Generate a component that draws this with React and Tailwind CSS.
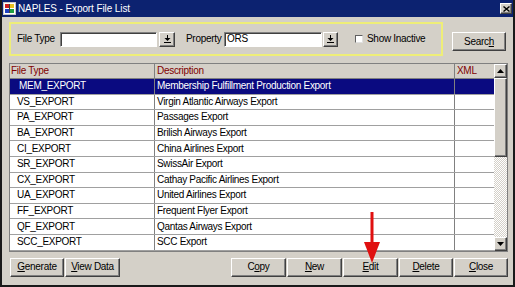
export default function App() {
  const rows = [
    ["MEM_EXPORT", "Membership Fulfillment Production Export"],
    ["VS_EXPORT", "Virgin Atlantic Airways Export"],
    ["PA_EXPORT", "Passages Export"],
    ["BA_EXPORT", "Brilish Airways Export"],
    ["CI_EXPORT", "China Airlines Export"],
    ["SR_EXPORT", "SwissAir Export"],
    ["CX_EXPORT", "Cathay Pacific Airlines Export"],
    ["UA_EXPORT", "United Airlines Export"],
    ["FF_EXPORT", "Frequent Flyer Export"],
    ["QF_EXPORT", "Qantas Airways Export"],
    ["SCC_EXPORT", "SCC Export"],
  ];
  const bevel =
    "bg-[#d4d0c8] border border-t-white border-l-white border-r-[#404040] border-b-[#404040] shadow-[inset_-1px_-1px_0_#808080]";
  const Btn = ({ w, children }) => (
    <div className={`${bevel} ${w} h-[19px] flex items-center justify-center shrink-0`}>{children}</div>
  );
  const DropBtn = ({ w }) => (
    <div className={`${bevel} ${w} h-[15px] flex items-center justify-center shrink-0`}>
      <svg width="7" height="8" viewBox="0 0 7 8">
        <rect x="3" y="0" width="1" height="3" fill="#000" />
        <path d="M0.5 3 L6.5 3 L3.5 6 Z" fill="#000" />
        <rect x="0" y="7" width="7" height="1" fill="#000" />
      </svg>
    </div>
  );
  const field =
    "bg-white h-[15px] border border-t-[#808080] border-l-[#808080] border-r-white border-b-white shadow-[inset_1px_1px_0_#404040] flex items-center pl-[2px] shrink-0";
  return (
    <div className="relative w-[515px] h-[287px] bg-[#d4d0c8] border-x-2 border-b-2 border-[#1a1a1a] flex flex-col font-['Liberation_Sans',Arial,sans-serif] text-[10px] tracking-[-0.3px] leading-none text-black overflow-hidden whitespace-nowrap">
      {/* Title bar */}
      <div className="h-[17px] bg-[#0c2270] flex items-center shrink-0 pl-[1px] pr-[1px]">
        <svg width="13" height="13" viewBox="0 0 13 13" className="shrink-0">
          <rect x="0" y="0" width="13" height="13" fill="#c8c8c8" />
          <rect x="1" y="1" width="11" height="11" fill="#fff" />
          <rect x="2" y="2" width="4" height="4" fill="#d02020" />
          <rect x="7" y="2" width="4" height="4" fill="#e8c020" />
          <rect x="2" y="7" width="4" height="4" fill="#2040c0" />
          <rect x="7" y="7" width="4" height="4" fill="#20a040" />
          <rect x="6" y="2" width="1" height="9" fill="#404040" />
        </svg>
        <span className="text-white ml-[2px] text-[10px] tracking-[-0.1px]">NAPLES - Export File List</span>
        <div className={`${bevel} ml-auto w-[12px] h-[11px] flex items-center justify-center`}>
          <svg width="7" height="6" viewBox="0 0 7 6">
            <path d="M0.5 0.5 L6.5 5.5 M6.5 0.5 L0.5 5.5" stroke="#000" strokeWidth="1.4" />
          </svg>
        </div>
      </div>

      <div className="flex flex-col pl-[7px] pr-[6px]">
        {/* Filter row */}
        <div className="flex items-start mt-[5px]">
          <div className="w-[434px] h-[34px] border-2 border-[#eeee78] flex items-center shrink-0">
            <span className="w-[49px] pl-[6px] shrink-0">File Type</span>
            <div className={`${field} w-[97px]`}></div>
            <div className="w-[2px]" />
            <DropBtn w="w-[16px]" />
            <span className="ml-[11px] w-[38px] shrink-0">Property</span>
            <div className={`${field} w-[98px]`}>ORS</div>
            <div className="w-[1px]" />
            <DropBtn w="w-[15px]" />
            <div className="ml-[17px] w-[8px] h-[8px] bg-white border border-t-[#606060] border-l-[#606060] border-r-[#e0e0e0] border-b-[#e0e0e0] shrink-0" />
            <span className="ml-[4px]">Show Inactive</span>
          </div>
          <div className="ml-[9px] mt-[10px]">
            <div className={`${bevel} w-[54px] h-[19px] flex items-center justify-center`}>
              <span>
                Searc<span className="underline">h</span>
              </span>
            </div>
          </div>
        </div>

        {/* Grid */}
        <div className="mt-[7px] w-[499px] border border-[#808080] flex">
          <div className="flex flex-col w-[484px] bg-white">
            <div className="flex h-[15px] bg-[#d4d0c8] text-[#800000] border-b border-[#808080]">
              <div className="w-[145px] pl-[1px] flex items-center border-r border-[#808080]">File Type</div>
              <div className="w-[300px] pl-[2px] flex items-center border-r border-[#808080]">Description</div>
              <div className="w-[39px] pl-[2px] flex items-center">XML</div>
            </div>
            {rows.map(([a, b], i) => (
              <div
                key={a}
                className={`flex h-[15.6px] border-b border-[#a0a0a0] ${i === 0 ? "bg-[#0a0a80] text-white" : "bg-white"}`}
              >
                <div className={`w-[145px] ${i === 0 ? "pl-[9px]" : "pl-[7px]"} flex items-center border-r border-[#808080]`}>{a}</div>
                <div className="w-[300px] pl-[2px] flex items-center border-r border-[#808080]">{b}</div>
                <div className="w-[39px]"></div>
              </div>
            ))}
          </div>
          {/* Scrollbar */}
          <div className="w-[13px] flex flex-col">
            <div className={`${bevel} h-[14px] flex items-center justify-center`}>
              <svg width="7" height="4" viewBox="0 0 7 4"><path d="M3.5 0 L7 4 L0 4 Z" fill="#000" /></svg>
            </div>
            <div className={`${bevel} h-[79px]`} />
            <div className="flex-1 bg-[repeating-conic-gradient(#ffffff_0_25%,#d4d0c8_0_50%)] bg-[length:2px_2px]" />
            <div className={`${bevel} h-[14px] flex items-center justify-center`}>
              <svg width="7" height="4" viewBox="0 0 7 4"><path d="M0 0 L7 0 L3.5 4 Z" fill="#000" /></svg>
            </div>
          </div>
        </div>

        {/* Buttons */}
        <div className="flex mt-[6px] pl-[1px]">
          <Btn w="w-[54px]"><span><span className="underline">G</span>enerate</span></Btn>
          <div className="w-[1px]" />
          <Btn w="w-[55px]"><span><span className="underline">V</span>iew Data</span></Btn>
          <div className="flex ml-auto gap-[1px] mr-[-1px]">
            <Btn w="w-[55px]"><span>C<span className="underline">o</span>py</span></Btn>
            <Btn w="w-[55px]"><span><span className="underline">N</span>ew</span></Btn>
            <Btn w="w-[55px]"><span><span className="underline">E</span>dit</span></Btn>
            <Btn w="w-[54px]"><span><span className="underline">D</span>elete</span></Btn>
            <Btn w="w-[54px]"><span><span className="underline">C</span>lose</span></Btn>
          </div>
        </div>
      </div>

      {/* Red arrow annotation */}
      <svg className="absolute left-[360px] top-[210px]" width="20" height="54" viewBox="0 0 20 54">
        <rect x="8.5" y="2" width="3" height="32" fill="#e01010" />
        <path d="M2 32 L18 32 L10 53 Z" fill="#e01010" />
      </svg>
    </div>
  );
}
